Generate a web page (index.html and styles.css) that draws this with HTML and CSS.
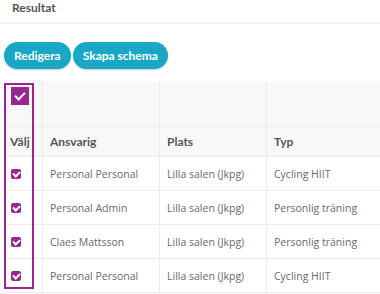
FILE: index.html
```html
<!DOCTYPE html>
<html lang="sv">
<head>
  <meta charset="utf-8">
  <title>Resultat</title>
  <link rel="stylesheet" href="styles.css">
</head>
<body>
  <div class="panel-head">Resultat</div>

  <div class="actions">
    <button class="pill">Redigera</button>
    <button class="pill">Skapa schema</button>
  </div>

  <div class="table-wrap">
    <table class="results">
      <thead>
        <tr class="tools">
          <th class="sel"><span class="check big"></span></th>
          <th></th>
          <th></th>
          <th></th>
        </tr>
        <tr class="labels">
          <th class="sel">Välj</th>
          <th>Ansvarig</th>
          <th>Plats</th>
          <th>Typ</th>
        </tr>
      </thead>
      <tbody>
        <tr>
          <td class="sel"><span class="check"></span></td>
          <td>Personal Personal</td>
          <td>Lilla salen (Jkpg)</td>
          <td>Cycling HIIT</td>
        </tr>
        <tr>
          <td class="sel"><span class="check"></span></td>
          <td>Personal Admin</td>
          <td>Lilla salen (Jkpg)</td>
          <td>Personlig träning</td>
        </tr>
        <tr>
          <td class="sel"><span class="check"></span></td>
          <td>Claes Mattsson</td>
          <td>Lilla salen (Jkpg)</td>
          <td>Personlig träning</td>
        </tr>
        <tr>
          <td class="sel"><span class="check"></span></td>
          <td>Personal Personal</td>
          <td>Lilla salen (Jkpg)</td>
          <td>Cycling HIIT</td>
        </tr>
      </tbody>
    </table>
    <div class="highlight"></div>
  </div>
</body>
</html>
```

FILE: styles.css
```css
html {
  overflow: hidden;
}

body {
  margin: 0;
  font-family: Lato, "Open Sans", sans-serif;
  color: #666;
  background: #fff;
  font-size: 12px;
}

.panel-head {
  height: 22px;
  padding: 0 12px;
  font-weight: bold;
  color: #555;
  line-height: 15px;
  border-bottom: 2px solid #f3f3f3;
}

.actions {
  display: flex;
  gap: 2px;
  padding: 18px 4px 0;
}

.pill {
  border: 0;
  border-radius: 14px;
  height: 27px;
  padding: 0 10px;
  color: #fff;
  background: #19a7c6;
  font-family: inherit;
  font-size: 12px;
  font-weight: bold;
  box-shadow: 0 1px 2px rgba(0, 0, 0, 0.2);
  cursor: pointer;
}

.table-wrap {
  position: relative;
  margin-top: 12px;
  padding-left: 4px;
}

.results {
  border-collapse: collapse;
  table-layout: fixed;
  width: 420px;
}

.results th {
  background: #f8f8f8;
  color: #555;
  font-weight: bold;
  text-align: left;
}

.results td {
  font-family: "Open Sans", "Noto Sans", sans-serif;
  font-size: 10.5px;
  color: #6a6a6a;
}

.results th, .results td {
  border: 1px solid #ececec;
  border-top: 0;
  padding: 0 6px 0 7px;
  white-space: nowrap;
  overflow: hidden;
  line-height: 14px;
}

.results th:first-child, .results td:first-child {
  border-left: 0;
}

.results tr.tools th {
  height: 39px;
  vertical-align: top;
  padding-top: 6px;
}

.results tr.labels th {
  height: 29px;
}

.results td {
  height: 33px;
}

.results .sel {
  width: 25px;
  padding: 0 6px;
}

.results th:nth-child(2) { width: 103px; }
.results th:nth-child(3) { width: 93px; }

.results tr.tools .sel {
  padding-left: 7px;
}

.check {
  display: block;
  position: relative;
  width: 10px;
  height: 10px;
  margin-left: 1px;
  border-radius: 2px;
  background: #9a278f;
}

.check::after {
  content: "";
  position: absolute;
  left: 3px;
  top: 1px;
  width: 3px;
  height: 5px;
  border: solid #fff;
  border-width: 0 2px 2px 0;
  transform: rotate(45deg);
}

.check.big {
  width: 18px;
  height: 18px;
  margin-left: 0;
  border-radius: 0;
}

.check.big::after {
  left: 6px;
  top: 3px;
  width: 4px;
  height: 8px;
}

.highlight {
  position: absolute;
  left: 4px;
  top: 2px;
  width: 26px;
  height: 202px;
  border: 2px solid #9a278f;
}
```
